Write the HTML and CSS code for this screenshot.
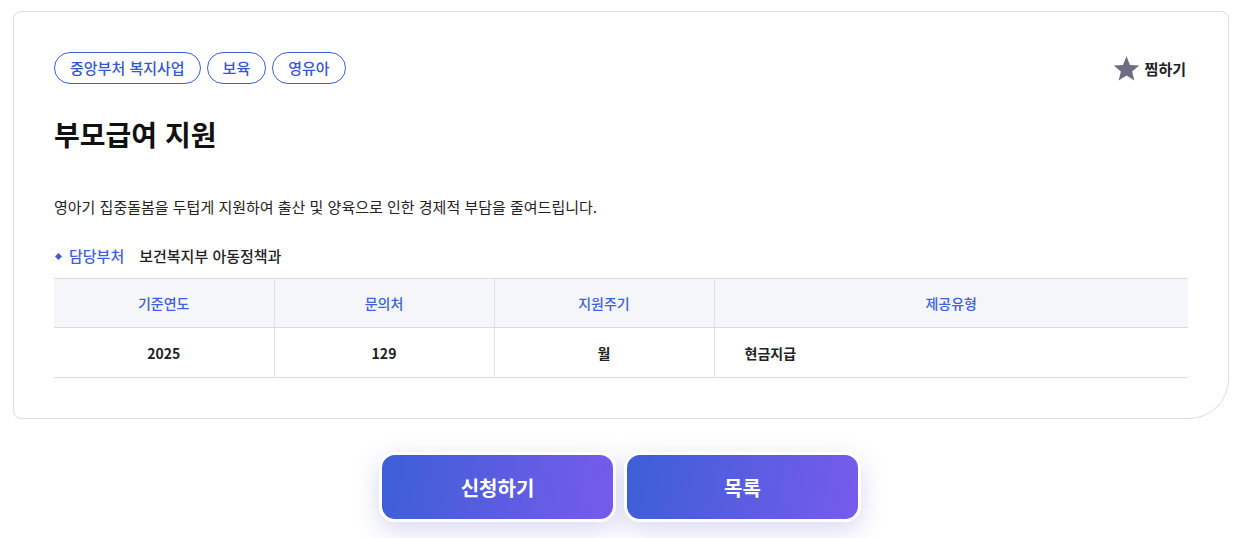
FILE: index.html
```html
<!DOCTYPE html>
<html lang="ko">
<head>
<meta charset="utf-8">
<title>부모급여 지원</title>
<link rel="stylesheet" href="styles.css">
</head>
<body>
<div class="page">
  <section class="card">
    <div class="card-top">
      <ul class="tags">
        <li class="tag">중앙부처 복지사업</li>
        <li class="tag">보육</li>
        <li class="tag">영유아</li>
      </ul>
      <button class="fav" type="button">
        <svg class="star" viewBox="0 0 24 24" width="27" height="27" aria-hidden="true"><path d="M12 1.2l3.1 7.6 8.2.6-6.3 5.3 2 8-7-4.4-7 4.4 2-8L.7 9.4l8.2-.6z" fill="#6b6e82"/></svg>
        <span>찜하기</span>
      </button>
    </div>
    <h1 class="title">부모급여 지원</h1>
    <p class="desc">영아기 집중돌봄을 두텁게 지원하여 출산 및 양육으로 인한 경제적 부담을 줄여드립니다.</p>
    <div class="dept">
      <span class="dept-label">담당부처</span>
      <span class="dept-value">보건복지부 아동정책과</span>
    </div>
    <table class="info">
      <thead>
        <tr>
          <th class="c1">기준연도</th>
          <th class="c2">문의처</th>
          <th class="c3">지원주기</th>
          <th class="c4">제공유형</th>
        </tr>
      </thead>
      <tbody>
        <tr>
          <td>2025</td>
          <td>129</td>
          <td>월</td>
          <td class="left">현금지급</td>
        </tr>
      </tbody>
    </table>
  </section>
  <div class="actions">
    <button class="btn" type="button">신청하기</button>
    <button class="btn" type="button">목록</button>
  </div>
</div>
</body>
</html>
```

FILE: styles.css
```css
* { box-sizing: border-box; }
html, body { margin: 0; padding: 0; background: #fff; }
body {
  font-family: "Noto Sans CJK KR", "Noto Sans", sans-serif;
  color: #222;
}
.page {
  padding: 11px 10px 16px 13px;
}
.card {
  border: 1px solid #dedede;
  border-radius: 8px 8px 40px 8px;
  padding: 40px 40px 40px 40px;
  height: 408px;
}
.card-top {
  display: flex;
  justify-content: space-between;
  align-items: center;
}
.tags {
  list-style: none;
  margin: 0;
  padding: 0;
  display: flex;
  gap: 6px;
}
.tag {
  height: 32px;
  padding: 0 15px;
  border: 1px solid #3f5fdc;
  border-radius: 16px;
  color: #3656d4;
  font-size: 15px;
  font-weight: 500;
  line-height: 30px;
}
.fav {
  display: flex;
  align-items: center;
  gap: 5px;
  border: 0;
  background: none;
  padding: 0;
  margin-right: 2px;
  font-family: inherit;
  font-size: 15px;
  font-weight: 700;
  color: #222;
}
.title {
  margin: 30px 0 0;
  font-size: 28px;
  line-height: 40px;
  font-weight: 700;
  color: #111;
}
.desc {
  margin: 41px 0 0;
  font-size: 15px;
  line-height: 24px;
  color: #222;
}
.dept {
  margin-top: 25px;
  display: flex;
  align-items: center;
  font-size: 15px;
  line-height: 24px;
}
.dept-label {
  position: relative;
  padding-left: 15px;
  color: #3f5fdc;
  font-weight: 500;
  margin-right: 15px;
}
.dept-label::before {
  content: "";
  position: absolute;
  left: 2px;
  top: 10px;
  width: 5px;
  height: 5px;
  background: #3f5fdc;
  transform: rotate(45deg);
}
.dept-value {
  font-weight: 500;
  color: #222;
}
.info {
  margin-top: 10px;
  width: 100%;
  border-collapse: collapse;
  font-size: 14px;
}
.info th, .info td {
  height: 49px;
  text-align: center;
  border-left: 1px solid #e2e2e6;
  padding: 0;
}
.info td { height: 50px; }
.info th:first-child, .info td:first-child { border-left: 0; }
.info thead tr { border-top: 1px solid #dcdce0; border-bottom: 1px solid #dcdce0; }
.info tbody tr { border-bottom: 1px solid #dcdce0; }
.info th {
  background: #f5f6fa;
  color: #3f5fdc;
  font-weight: 500;
}
.info td {
  color: #222;
  font-weight: 700;
}
.info td.left { text-align: left; padding-left: 30px; }
.c1, .c2, .c3 { width: 220px; }
.actions {
  display: flex;
  justify-content: center;
  gap: 8px;
  margin-top: 33px;
  padding-right: 2px;
}
.btn {
  width: 237px;
  height: 70px;
  border: 3px solid #fff;
  border-radius: 16px;
  background: linear-gradient(100deg, #3c5fd6 0%, #775bec 100%);
  color: #fff;
  font-family: inherit;
  font-size: 20px;
  font-weight: 700;
  box-shadow: 0 8px 26px rgba(90, 90, 200, 0.24);
}
```
